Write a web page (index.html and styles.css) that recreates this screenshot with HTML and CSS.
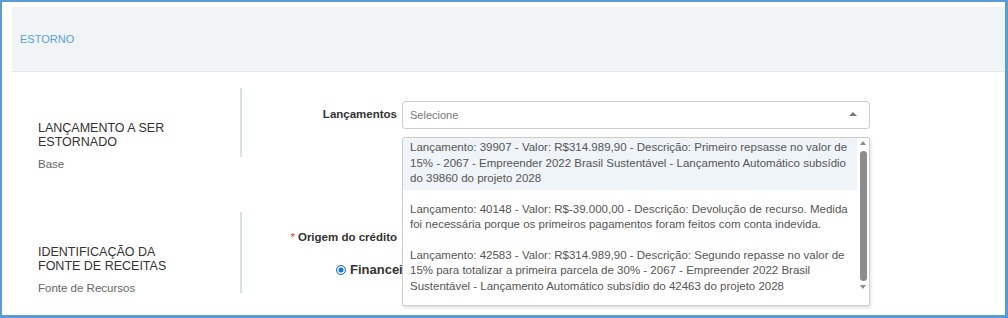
FILE: index.html
```html
<!DOCTYPE html>
<html lang="pt-BR">
<head>
    <meta charset="UTF-8">
    <meta name="viewport" content="width=device-width, initial-scale=1.0">
    <title>Estorno</title>
    <link rel="stylesheet" href="styles.css">
</head>
<body>
    <div class="frame">
        <div class="panel-header">
            <span class="panel-title">ESTORNO</span>
        </div>

        <!-- Lançamento a ser estornado -->
        <div class="section">
            <div class="section-info">
                <h3 class="section-title">LANÇAMENTO A SER ESTORNADO</h3>
                <p class="section-sub">Base</p>
            </div>
            <div class="section-body body-base">
                <div class="field">
                    <label class="field-label">Lançamentos</label>
                    <div class="select-wrap">
                        <div class="select-box">
                            <span class="placeholder">Selecione</span>
                            <span class="caret"></span>
                        </div>
                        <div class="dropdown">
                            <ul class="options">
                                <li class="option active">Lançamento: 39907 - Valor: R$314.989,90 - Descrição: Primeiro repsasse no valor de 15% - 2067 - Empreender 2022 Brasil Sustentável - Lançamento Automático subsídio do 39860 do projeto 2028</li>
                                <li class="option">Lançamento: 40148 - Valor: R$-39.000,00 - Descrição: Devolução de recurso. Medida foi necessária porque os primeiros pagamentos foram feitos com conta indevida.</li>
                                <li class="option">Lançamento: 42583 - Valor: R$314.989,90 - Descrição: Segundo repasse no valor de 15% para totalizar a primeira parcela de 30% - 2067 - Empreender 2022 Brasil Sustentável - Lançamento Automático subsídio do 42463 do projeto 2028</li>
                            </ul>
                            <div class="scrollbar">
                                <span class="scroll-up"></span>
                                <span class="thumb"></span>
                                <span class="scroll-down"></span>
                            </div>
                        </div>
                    </div>
                </div>
            </div>
        </div>

        <!-- Identificação da fonte de receitas -->
        <div class="section">
            <div class="section-info">
                <h3 class="section-title">IDENTIFICAÇÃO DA FONTE DE RECEITAS</h3>
                <p class="section-sub">Fonte de Recursos</p>
            </div>
            <div class="section-body body-fonte">
                <div class="field">
                    <label class="field-label"><span class="req">*</span>Origem do crédito</label>
                </div>
                <div class="radio-row">
                    <span class="radio"></span>
                    <span class="radio-text">Financeiro</span>
                </div>
            </div>
        </div>
    </div>
</body>
</html>
```

FILE: styles.css
```css
* {
    box-sizing: border-box;
}
body {
    margin: 0;
    font-family: "Liberation Sans", Arial, sans-serif;
    color: #333;
    background-color: #fff;
}
.frame {
    height: 318px;
    border: 2px solid #5b9bd5;
    border-right-width: 3px;
    border-bottom-width: 3px;
    padding: 5px 0 0 10px;
    overflow: hidden;
}
.panel-header {
    display: flex;
    align-items: center;
    height: 65px;
    padding-left: 8px;
    background-color: #f0f4f5;
    border-bottom: 1px solid #dfe7e7;
}
.panel-title {
    font-size: 11px;
    color: #5a9fd8;
}

/* sections: title on the left, form on the right */
.section {
    display: grid;
    grid-template-columns: 228px 1fr;
    align-items: start;
    margin-top: 16px;
}
.section + .section {
    margin-top: 41px;
}
.section-info {
    padding: 33px 50px 0 26px;
}
.section-title {
    margin: 0;
    font-size: 12.5px;
    font-weight: normal;
    line-height: 14px;
    color: #333;
}
.section-sub {
    margin: 8px 0 0;
    font-size: 11.5px;
    line-height: 14px;
    color: #666;
}
.section-body {
    border-left: 2px solid #d6e1e1;
}
.body-base {
    height: 69px;
    padding-top: 13px;
}
.body-fonte {
    height: 81px;
    padding-top: 18px;
}
.field {
    display: grid;
    grid-template-columns: 155px 468px;
    column-gap: 5px;
    align-items: start;
}
.field-label {
    text-align: right;
    font-size: 11.5px;
    font-weight: bold;
    line-height: 14px;
    color: #333;
}
.body-base .field-label {
    padding-top: 6px;
}
.req {
    color: #e03c3c;
    margin-right: 3px;
    font-weight: normal;
}

/* select */
.select-wrap {
    position: relative;
}
.select-box {
    display: flex;
    align-items: center;
    justify-content: space-between;
    height: 28px;
    padding: 0 12px 0 7px;
    border: 1px solid #ccc;
    border-radius: 3px;
    background-color: #fff;
}
.placeholder {
    font-size: 11px;
    color: #777;
}
.caret {
    width: 0;
    height: 0;
    border-left: 4px solid transparent;
    border-right: 4px solid transparent;
    border-bottom: 4px solid #777;
    margin-top: -3px;
}
.dropdown {
    position: absolute;
    z-index: 2;
    top: calc(100% + 8px);
    left: 0;
    width: 468px;
    height: 169px;
    display: flex;
    background-color: #fff;
    border: 1px solid #ccc;
    border-radius: 2px;
    box-shadow: 1px 2px 3px rgba(0, 0, 0, 0.12);
    overflow: hidden;
}
.options {
    flex: 1;
    list-style: none;
    margin: 0;
    padding: 0;
}
.option {
    padding: 2px 5px 3px 7px;
    margin-bottom: 10px;
    font-size: 11.5px;
    line-height: 15.5px;
    color: #555;
}
.option.active {
    background-color: #eef4f8;
}
.scrollbar {
    width: 12px;
    display: flex;
    flex-direction: column;
    align-items: center;
    padding-top: 3px;
}
.scroll-up,
.scroll-down {
    width: 0;
    height: 0;
    border-left: 3px solid transparent;
    border-right: 3px solid transparent;
}
.scroll-up {
    border-bottom: 4px solid #8a8a8a;
}
.scroll-down {
    margin-top: 4px;
    border-top: 4px solid #8a8a8a;
}
.thumb {
    width: 7px;
    height: 130px;
    margin-top: 6px;
    border-radius: 4px;
    background-color: #8c8c8c;
}

/* radio */
.radio-row {
    display: flex;
    align-items: center;
    gap: 4px;
    margin-top: 18px;
    padding-left: 94px;
}
.radio {
    width: 10px;
    height: 10px;
    border-radius: 50%;
    border: 1px solid #1a73e8;
    background-color: #1a73e8;
    box-shadow: inset 0 0 0 1.5px #fff;
}
.radio-text {
    font-size: 13px;
    font-weight: bold;
    line-height: 16px;
    color: #333;
}
```
